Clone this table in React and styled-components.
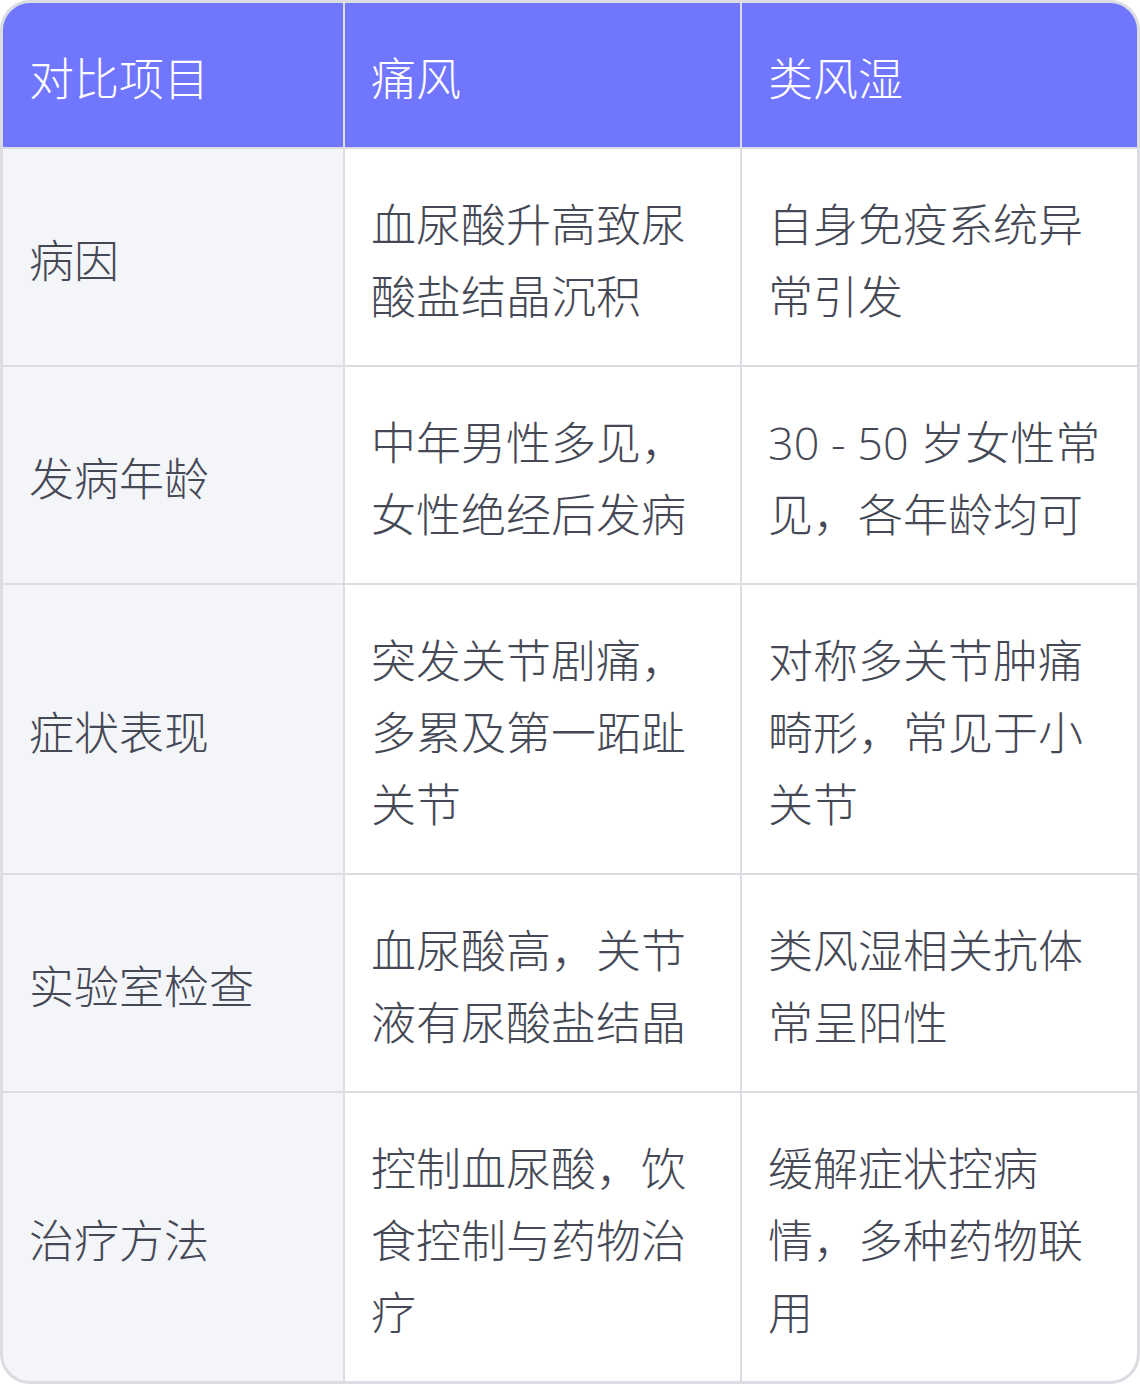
import React from "react";
import styled, { createGlobalStyle } from "styled-components";

const Global = createGlobalStyle`
  html, body { margin: 0; padding: 0; background: #ffffff; }
  body { font-family: "Open Sans", "Noto Sans CJK SC", sans-serif; }
`;

const Frame = styled.div`
  width: 1140px;
  box-sizing: border-box;
  border: 3px solid #dcdde2;
  border-radius: 30px;
  overflow: hidden;
  background: #dcdde2;
`;

const Grid = styled.div`
  display: grid;
  grid-template-columns: 340px 395px 1fr;
  gap: 2px;
`;

const Cell = styled.div`
  box-sizing: border-box;
  padding: 40px 28px 32px 26px;
  display: flex;
  align-items: center;
  font-family: "Open Sans", "Noto Sans CJK SC", sans-serif;
  font-size: 45px;
  line-height: 72px;
  font-weight: 300;
  color: ${(p) => (p.$head ? "#ffffff" : "#454855")};
  background: ${(p) => (p.$head ? "#7176ff" : p.$first ? "#f4f5f9" : "#ffffff")};
`;

const Text = styled.span`
  display: block;
  width: 100%;
`;

const head = ["对比项目", "痛风", "类风湿"];
const rows = [
  ["病因", "血尿酸升高致尿酸盐结晶沉积", "自身免疫系统异常引发"],
  ["发病年龄", "中年男性多见，女性绝经后发病", "30 - 50 岁女性常见，各年龄均可"],
  ["症状表现", "突发关节剧痛，多累及第一跖趾关节", "对称多关节肿痛畸形，常见于小关节"],
  ["实验室检查", "血尿酸高，关节液有尿酸盐结晶", "类风湿相关抗体常呈阳性"],
  ["治疗方法", "控制血尿酸，饮食控制与药物治疗", "缓解症状控病情，多种药物联用"],
];

export default function App() {
  return (
    <>
      <Global />
      <Frame>
        <Grid>
          {head.map((h) => (
            <Cell key={h} $head>
              <Text>{h}</Text>
            </Cell>
          ))}
          {rows.map((r) =>
            r.map((c, i) => (
              <Cell key={r[0] + i} $first={i === 0}>
                <Text>{c}</Text>
              </Cell>
            ))
          )}
        </Grid>
      </Frame>
    </>
  );
}
